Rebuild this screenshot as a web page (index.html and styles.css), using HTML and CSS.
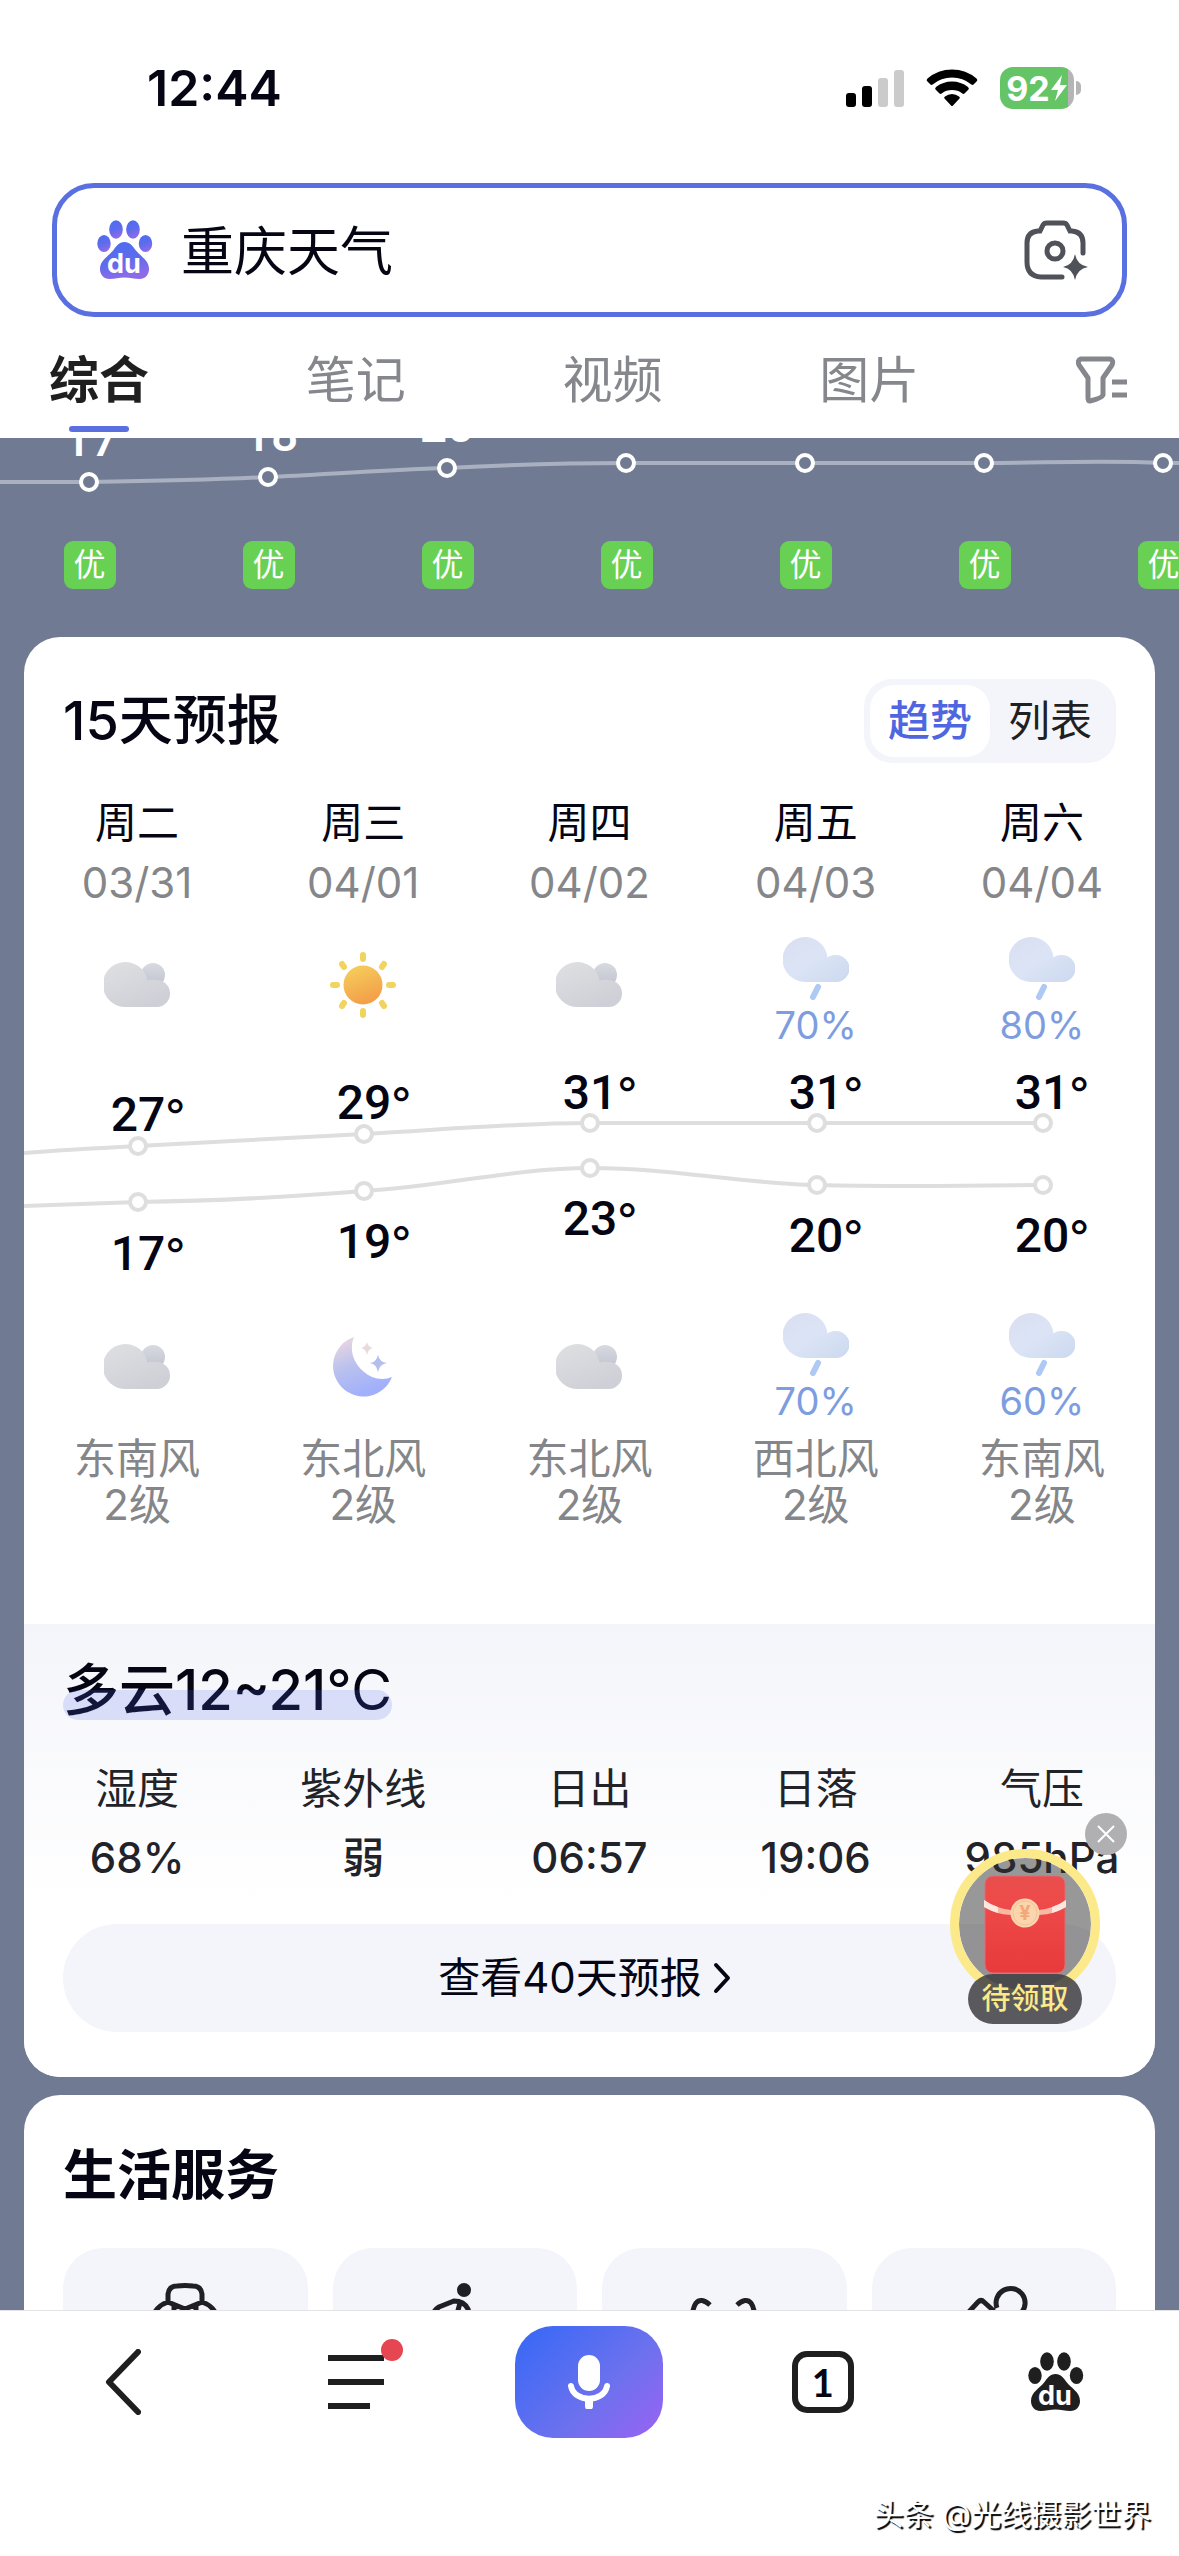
FILE: index.html
```html
<!DOCTYPE html>
<html lang="zh-CN">
<head>
    <meta charset="UTF-8">
    <meta name="viewport" content="width=device-width, initial-scale=1.0">
    <title>重庆天气</title>
    <link rel="stylesheet" href="styles.css">
</head>
<body>

    <!-- Shared icons -->
    <svg class="defs" width="0" height="0" aria-hidden="true">
        <defs>
            <linearGradient id="pawFill" x1="0" y1="0" x2="0.3" y2="1">
                <stop offset="0" stop-color="#4a6cf0"/>
                <stop offset="0.6" stop-color="#5f6cec"/>
                <stop offset="1" stop-color="#8c6bea"/>
            </linearGradient>
            <linearGradient id="cloudFill" x1="0" y1="0" x2="0.6" y2="1">
                <stop offset="0" stop-color="#dfe0e2"/>
                <stop offset="1" stop-color="#cfd0d7"/>
            </linearGradient>
            <linearGradient id="cloudBack" x1="0" y1="0" x2="0" y2="1">
                <stop offset="0" stop-color="#d8dae0"/>
                <stop offset="1" stop-color="#bfc3cf"/>
            </linearGradient>
            <linearGradient id="rainFill" x1="0" y1="0" x2="1" y2="1">
                <stop offset="0" stop-color="#dadff0"/>
                <stop offset="0.5" stop-color="#dbe4f6"/>
                <stop offset="1" stop-color="#cbd8ee"/>
            </linearGradient>
            <linearGradient id="sunFill" x1="0" y1="0" x2="0.4" y2="1">
                <stop offset="0" stop-color="#f6d25c"/>
                <stop offset="1" stop-color="#f3a04a"/>
            </linearGradient>
            <linearGradient id="moonFill" x1="0" y1="0" x2="0.4" y2="1">
                <stop offset="0" stop-color="#f2dade"/>
                <stop offset="0.5" stop-color="#bcc2ee"/>
                <stop offset="1" stop-color="#a0b0fa"/>
            </linearGradient>
            <linearGradient id="packetFill" x1="0" y1="0" x2="0" y2="1">
                <stop offset="0" stop-color="#e84e4c"/>
                <stop offset="0.25" stop-color="#ee4b4a"/>
                <stop offset="1" stop-color="#e83a3b"/>
            </linearGradient>
        </defs>
        <symbol id="paw" viewBox="0 0 56 60">
            <ellipse cx="19" cy="9.5" rx="6.8" ry="9.2"/>
            <ellipse cx="36" cy="9.5" rx="6.8" ry="9.2"/>
            <ellipse cx="7" cy="23.5" rx="6.7" ry="8.6"/>
            <ellipse cx="48.5" cy="23.5" rx="6.7" ry="8.6"/>
            <path d="M27.5 22C33 22 35.5 26 38.5 30C43 36 52 40 52 49C52 55 48 59 42.5 59C37 59 33 57.5 27.5 57.5C22 57.5 18 59 12.5 59C7 59 3 55 3 49C3 40 12 36 16.5 30C19.5 26 22 22 27.5 22Z"/>
            <text class="paw-text" x="27" y="53" text-anchor="middle">du</text>
        </symbol>
        <symbol id="cloud" viewBox="0 0 66 46">
            <circle cx="49" cy="13" r="12" fill="url(#cloudBack)"/>
            <path d="M22 45A22.5 22.5 0 1 1 43.5 18.5C46 17.5 49 17.5 52 18A13.5 13.5 0 0 1 53 45Z" fill="url(#cloudFill)"/>
        </symbol>
        <symbol id="rain" viewBox="0 0 66 64">
            <path d="M22 45A22.5 22.5 0 1 1 44.5 20.5C47 18.5 50 18 53 18A13.5 13.5 0 0 1 53 45Z" fill="url(#rainFill)"/>
            <path d="M35 50L30 60" stroke="#aec9f4" stroke-width="6" stroke-linecap="round"/>
        </symbol>
        <symbol id="sun" viewBox="0 0 66 66">
            <circle cx="33" cy="33" r="19.5" fill="url(#sunFill)"/>
            <g stroke="#f1d45e" stroke-width="6" stroke-linecap="round">
                <path d="M33 3V7M33 59V63M3 33H7M59 33H63M12 12L14 15M52 51L54 54M54 12L52 15M14 51L12 54"/>
            </g>
        </symbol>
        <symbol id="moon" viewBox="0 0 60 60">
            <path d="M21 0A30.5 30.5 0 1 0 59 40C50 44 38 42 30 34C20 25 16 12 21 0Z" fill="url(#moonFill)"/>
            <path d="M34 5Q35 10 40 11Q35 12 34 18Q33 12 28 11Q33 10 34 5Z" fill="#ead8dc"/>
            <path d="M45 18Q46.5 25 54 26Q46.5 27 45 35Q43.5 27 37 26Q43.5 25 45 18Z" fill="#b4bfec"/>
        </symbol>
    </svg>

    <header class="top">
        <div class="status">
            <span class="time">12:44</span>
            <div class="status-icons">
                <svg width="58" height="38" viewBox="0 0 58 38" aria-hidden="true">
                    <rect x="0" y="24" width="10" height="14" rx="3"/>
                    <rect x="16" y="17" width="10" height="21" rx="3"/>
                    <rect x="32" y="9" width="10" height="29" rx="3" fill="#cbcbcb"/>
                    <rect x="48" y="1" width="10" height="37" rx="3" fill="#cbcbcb"/>
                </svg>
                <svg width="52" height="38" viewBox="0 0 52 38" aria-hidden="true">
                    <path d="M1 12Q0 11 1.5 9.5Q12 0.5 26 0.5Q40 0.5 50.5 9.5Q52 11 51 12L47.5 15.5Q46.5 16.5 45 15.3Q37 8.5 26 8.5Q15 8.5 7 15.3Q5.5 16.5 4.5 15.5Z"/>
                    <path d="M9.5 20.5Q8.5 19.5 10 18Q17 12.5 26 12.5Q35 12.5 42 18Q43.5 19.5 42.5 20.5L38.5 24.5Q37.5 25.5 36 24.3Q32 21 26 21Q20 21 16 24.3Q14.5 25.5 13.5 24.5Z"/>
                    <path d="M18.5 29.5Q17.5 28.5 19 27.5Q22 25 26 25Q30 25 33 27.5Q34.5 28.5 33.5 29.5L27 36.5Q26 37.5 25 36.5Z"/>
                </svg>
                <div class="battery">
                    <span>92</span>
                    <svg width="18" height="28" viewBox="0 0 18 28" aria-hidden="true"><path d="M12 1L1 16H8L5 27L17 11H10Z" fill="#fff"/></svg>
                </div>
            </div>
        </div>

        <form class="search">
            <svg class="logo" width="56" height="60" aria-hidden="true"><use href="#paw"/></svg>
            <input type="text" name="wd" value="重庆天气" aria-label="搜索">
            <button type="button" aria-label="拍照搜索">
                <svg width="64" height="60" viewBox="0 0 64 60" fill="none" stroke="#50525a" stroke-width="5" stroke-linecap="round" aria-hidden="true">
                    <path d="M59 33V23Q59 12 48 11H46L43 5Q42 3 39 3H23Q20 3 19 5L16 11H14Q3 12 3 23V42Q3 56 17 57H38"/>
                    <circle cx="31" cy="31" r="8"/>
                    <path d="M51 34Q53 45 64 47Q53 49 51 60Q49 49 39 47Q49 45 51 34Z" fill="#50525a" stroke="none"/>
                </svg>
            </button>
        </form>

        <nav class="tabs">
            <a class="tab active" href="#all">综合</a>
            <a class="tab" href="#notes">笔记</a>
            <a class="tab" href="#video">视频</a>
            <a class="tab" href="#images">图片</a>
            <button type="button" aria-label="筛选">
                <svg width="52" height="48" viewBox="0 0 52 48" fill="none" stroke="#85878c" stroke-width="5" stroke-linejoin="round" aria-hidden="true">
                    <path d="M5 3H34Q38 4 36 9L27 22V39Q26 42 14 45Q12 45 12 42V22L3 9Q1 4 5 3Z"/>
                    <path d="M36 26H51M36 39H51"/>
                </svg>
            </button>
        </nav>
    </header>

    <main class="content">
        <section class="hourly">
            <svg class="hourly-chart" viewBox="0 0 1179 70">
                <path d="M0 44C30 44 60 44 89 44C150 43 208 42 268 39C330 36 385 32 447 30C507 27 566 25 626 25H984C1043 25 1103 22 1163 25H1179" fill="none" stroke="#a9b1c1" stroke-width="4"/>
                <g fill="#707b93" stroke="#fff" stroke-width="4">
                    <circle cx="89" cy="44" r="8"/>
                    <circle cx="268" cy="39" r="8"/>
                    <circle cx="447" cy="30" r="8"/>
                    <circle cx="626" cy="25" r="8"/>
                    <circle cx="805" cy="25" r="8"/>
                    <circle cx="984" cy="25" r="8"/>
                    <circle cx="1163" cy="25" r="8"/>
                </g>
                <g class="hourly-temp">
                    <text x="91" y="18">17</text>
                    <text x="271" y="13">18</text>
                    <text x="447" y="4">20</text>
                </g>
            </svg>
            <ul class="air">
                <li><span>优</span></li>
                <li><span>优</span></li>
                <li><span>优</span></li>
                <li><span>优</span></li>
                <li><span>优</span></li>
                <li><span>优</span></li>
                <li><span>优</span></li>
            </ul>
        </section>

        <section class="card">
            <div class="card-head">
                <h2 class="forecast-title">15天预报</h2>
                <div class="toggle">
                    <button type="button" class="on">趋势</button>
                    <button type="button">列表</button>
                </div>
            </div>

            <div class="days">
                <div class="day">
                    <div class="name">周二</div>
                    <div class="date">03/31</div>
                    <div class="icon"><svg width="66" height="46"><use href="#cloud"/></svg></div>
                </div>
                <div class="day">
                    <div class="name">周三</div>
                    <div class="date">04/01</div>
                    <div class="icon"><svg width="66" height="66"><use href="#sun"/></svg></div>
                </div>
                <div class="day">
                    <div class="name">周四</div>
                    <div class="date">04/02</div>
                    <div class="icon"><svg width="66" height="46"><use href="#cloud"/></svg></div>
                </div>
                <div class="day">
                    <div class="name">周五</div>
                    <div class="date">04/03</div>
                    <div class="icon"><svg width="66" height="64"><use href="#rain"/></svg><span>70%</span></div>
                </div>
                <div class="day">
                    <div class="name">周六</div>
                    <div class="date">04/04</div>
                    <div class="icon"><svg width="66" height="64"><use href="#rain"/></svg><span>80%</span></div>
                </div>
            </div>

            <svg class="trend" viewBox="0 6 1131 268">
                <g class="trend-line">
                    <path d="M0 114C38 111 76 109 114 107C190 103 265 99 340 95C416 91 490 84 566 84H1019"/>
                    <path d="M0 167C38 166 76 164 114 163C190 162 265 158 340 152C416 148 490 129 566 129C650 129 710 144 792 146C870 148 940 147 1019 146"/>
                </g>
                <g class="trend-dot">
                    <circle cx="114" cy="107" r="8"/>
                    <circle cx="340" cy="95" r="8"/>
                    <circle cx="566" cy="84" r="8"/>
                    <circle cx="793" cy="84" r="8"/>
                    <circle cx="1019" cy="84" r="8"/>
                    <circle cx="114" cy="163" r="8"/>
                    <circle cx="340" cy="152" r="8"/>
                    <circle cx="566" cy="129" r="8"/>
                    <circle cx="793" cy="146" r="8"/>
                    <circle cx="1019" cy="146" r="8"/>
                </g>
                <g class="trend-temp">
                    <text x="124" y="92">27<tspan>°</tspan></text>
                    <text x="350" y="80">29<tspan>°</tspan></text>
                    <text x="576" y="70">31<tspan>°</tspan></text>
                    <text x="802" y="70">31<tspan>°</tspan></text>
                    <text x="1028" y="70">31<tspan>°</tspan></text>
                    <text x="124" y="231">17<tspan>°</tspan></text>
                    <text x="350" y="219">19<tspan>°</tspan></text>
                    <text x="576" y="196">23<tspan>°</tspan></text>
                    <text x="802" y="213">20<tspan>°</tspan></text>
                    <text x="1028" y="213">20<tspan>°</tspan></text>
                </g>
            </svg>

            <div class="days nights">
                <div class="day">
                    <div class="icon"><svg width="66" height="46"><use href="#cloud"/></svg></div>
                    <div class="wind">东南风<br>2级</div>
                </div>
                <div class="day">
                    <div class="icon"><svg width="60" height="60"><use href="#moon"/></svg></div>
                    <div class="wind">东北风<br>2级</div>
                </div>
                <div class="day">
                    <div class="icon"><svg width="66" height="46"><use href="#cloud"/></svg></div>
                    <div class="wind">东北风<br>2级</div>
                </div>
                <div class="day">
                    <div class="icon"><svg width="66" height="64"><use href="#rain"/></svg><span>70%</span></div>
                    <div class="wind">西北风<br>2级</div>
                </div>
                <div class="day">
                    <div class="icon"><svg width="66" height="64"><use href="#rain"/></svg><span>60%</span></div>
                    <div class="wind">东南风<br>2级</div>
                </div>
            </div>

            <div class="detail">
                <h3>多云12~21<span>℃</span></h3>
                <dl class="facts">
                    <div><dt>湿度</dt><dd>68%</dd></div>
                    <div><dt>紫外线</dt><dd>弱</dd></div>
                    <div><dt>日出</dt><dd>06:57</dd></div>
                    <div><dt>日落</dt><dd>19:06</dd></div>
                    <div><dt>气压</dt><dd>985hPa</dd></div>
                </dl>
                <a class="more" href="#forty">
                    查看40天预报
                    <svg width="18" height="32" viewBox="0 0 18 32" fill="none" stroke="#050514" stroke-width="4" stroke-linecap="round" stroke-linejoin="round" aria-hidden="true"><path d="M3 3L15 16L3 29"/></svg>
                </a>
            </div>
        </section>

        <section class="card life">
            <h2>生活服务</h2>
            <div class="tiles">
                <a class="tile" href="#dress" aria-label="穿衣">
                    <svg width="68" height="68" viewBox="0 0 68 68" aria-hidden="true"><path d="M17 19V11Q18 3 26 3Q34 2 42 3Q50 3 51 11V19L34 26ZM17 19Q5 23 2 34V60M51 19Q63 23 66 34V60M23 21V34M34 26V60M45 21V34"/></svg>
                </a>
                <a class="tile" href="#sport" aria-label="运动">
                    <svg width="68" height="68" viewBox="0 0 68 68" aria-hidden="true"><circle class="solid" cx="43" cy="7" r="7"/><path d="M11 33Q13 27 18 24L33 18Q43 18 47 26L50 36M39 20L33 42"/></svg>
                </a>
                <a class="tile" href="#sunglasses" aria-label="防晒">
                    <svg width="68" height="68" viewBox="0 0 68 68" aria-hidden="true"><path d="M1 38Q3 24 6 20Q11 14 20 22M66 38Q64 24 61 20Q56 14 47 22"/></svg>
                </a>
                <a class="tile" href="#travel" aria-label="出行">
                    <svg width="68" height="68" viewBox="0 0 68 68" aria-hidden="true"><path d="M6 32L18 19Q21 16 24 19L34 28M37 25A14.5 14.5 0 1 1 61 30"/></svg>
                </a>
            </div>
        </section>

        <aside class="packet">
            <button type="button" class="close" aria-label="关闭">
                <svg width="18" height="18" viewBox="0 0 18 18" stroke="#fff" stroke-width="2" aria-hidden="true"><path d="M1 1L17 17M17 1L1 17"/></svg>
            </button>
            <div class="ring">
                <svg width="84" height="98" viewBox="0 0 84 98" aria-hidden="true">
                    <rect x="2" y="1" width="80" height="97" rx="8" fill="url(#packetFill)" stroke="#e26b74" stroke-width="1"/>
                    <path d="M1 25Q12 33 28 35H56Q72 33 83 25V32Q72 39 56 40H28Q12 39 1 32Z" fill="#f9b8a2"/>
                    <path d="M1 25Q8 30 15 32V38Q8 36 1 32Z" fill="#fde7e0"/>
                    <path d="M83 25Q76 30 69 32V38Q76 36 83 32Z" fill="#fde7e0"/>
                    <circle cx="42" cy="38" r="14.5" fill="#fbd5ae"/>
                    <circle cx="42" cy="38" r="12" fill="none" stroke="#f5c295" stroke-width="1"/>
                    <text class="yen" x="42" y="45" text-anchor="middle">¥</text>
                </svg>
            </div>
            <a class="claim" href="#claim">待领取</a>
        </aside>
    </main>

    <footer class="bottom">
        <nav class="toolbar">
            <button type="button" aria-label="返回">
                <svg width="36" height="66" viewBox="0 0 36 66" fill="none" stroke="#1f1f1f" stroke-width="6" stroke-linecap="round" stroke-linejoin="round" aria-hidden="true"><path d="M33 3L4 33L33 63"/></svg>
            </button>
            <button type="button" class="menu" aria-label="菜单">
                <svg width="56" height="56" viewBox="0 0 56 56" stroke="#1f1f1f" stroke-width="6" aria-hidden="true"><path d="M0 4H56M0 28H56M0 52H42"/></svg>
            </button>
            <button type="button" class="mic" aria-label="语音">
                <svg width="42" height="54" viewBox="0 0 42 54" fill="none" stroke="#fff" stroke-width="6" stroke-linecap="round" aria-hidden="true">
                    <rect x="10" y="0" width="22" height="36" rx="11" fill="#fff" stroke="none"/>
                    <path d="M3 31C6 48 36 48 39 31"/>
                    <path d="M21 45V51" stroke-width="8"/>
                </svg>
            </button>
            <button type="button" aria-label="窗口"><span class="count">1</span></button>
            <button type="button" class="home" aria-label="首页">
                <svg width="56" height="60" aria-hidden="true"><use href="#paw"/></svg>
            </button>
        </nav>
        <p class="credit">头条 @光线摄影世界</p>
    </footer>

</body>
</html>
```
FILE: styles.css
```css
* {
    box-sizing: border-box;
}

body {
    display: flex;
    flex-direction: column;
    height: 100vh;
    margin: 0;
    background-color: #fff;
    color: #050514;
    font-family: Inter, "Noto Sans CJK SC", sans-serif;
    font-size: 42px;
}

h2, h3, p, ul, dl, dd {
    margin: 0;
    padding: 0;
}

h2 {
    font-size: 54px;
    font-weight: 600;
    line-height: 80px;
}

a {
    color: inherit;
    text-decoration: none;
}

button {
    padding: 0;
    border: none;
    background: none;
    color: inherit;
    font: inherit;
    cursor: pointer;
}

svg {
    display: block;
}

.defs {
    position: absolute;
}

.paw-text {
    fill: #fff;
    font-family: Inter, sans-serif;
    font-size: 27px;
    font-weight: 700;
}

/* Header */
.status {
    display: flex;
    align-items: center;
    justify-content: space-between;
    height: 176px;
    padding: 0 105px 0 147px;
}

.time {
    font-size: 50px;
    font-weight: 600;
}

.status-icons {
    display: flex;
    align-items: center;
    gap: 22px;
}

.battery {
    position: relative;
    display: flex;
    align-items: center;
    justify-content: center;
    width: 74px;
    height: 42px;
    border-radius: 13px;
    background: linear-gradient(90deg, #65c466 92%, #b5b5b5 92%);
    color: #fff;
    font-size: 34px;
    font-weight: 700;
}

.battery::after {
    content: "";
    position: absolute;
    right: -7px;
    top: 14px;
    width: 5px;
    height: 14px;
    border-radius: 0 5px 5px 0;
    background-color: #b5b5b5;
}

.search {
    display: flex;
    align-items: center;
    gap: 28px;
    height: 134px;
    margin: 7px 52px 0;
    padding: 0 34px 0 40px;
    border: 5px solid #5a70e0;
    border-radius: 42px;
}

.logo {
    fill: url(#pawFill);
}

.search input {
    flex: 1;
    min-width: 0;
    padding: 3px 0 0;
    border: none;
    outline: none;
    background: none;
    color: #050514;
    font: inherit;
    font-size: 53px;
    line-height: 60px;
}

.tabs {
    display: flex;
    justify-content: space-between;
    padding: 30px 51px 25px 49px;
    color: #85878c;
    font-size: 50px;
    line-height: 66px;
}

.tab {
    position: relative;
}

.tab.active {
    color: #1f1f1f;
    font-weight: 700;
}

.tab.active::after {
    content: "";
    position: absolute;
    bottom: -19px;
    left: 20px;
    right: 20px;
    height: 6px;
    border-radius: 3px;
    background-color: #5a70e0;
}

/* Scrolled page */
.content {
    position: relative;
    flex: 1;
    min-height: 0;
    overflow: hidden;
    background-color: #707b93;
}

.hourly {
    padding-bottom: 48px;
}

.hourly-chart {
    width: 100%;
    overflow: hidden;
}

.hourly-temp {
    fill: #fff;
    font-family: Roboto, sans-serif;
    font-size: 48px;
    font-weight: 500;
    text-anchor: middle;
}

.air {
    display: flex;
    margin-top: 33px;
    list-style: none;
}

.air li {
    display: flex;
    flex: 0 0 179px;
    justify-content: center;
}

.air span {
    width: 52px;
    border-radius: 9px;
    background-color: #68d154;
    color: #fff;
    font-size: 32px;
    line-height: 48px;
    text-align: center;
}

.card {
    margin: 0 24px 18px;
    border-radius: 36px;
    background-color: #fff;
    overflow: hidden;
}

.card-head {
    display: flex;
    align-items: center;
    justify-content: space-between;
    padding: 42px 39px 30px;
}

.forecast-title {
    font-weight: 500;
}

.toggle {
    display: flex;
    padding: 6px;
    border-radius: 28px;
    background-color: #f4f5fa;
    color: #1f1f24;
}

.toggle button {
    width: 120px;
    border-radius: 24px;
    line-height: 72px;
}

.toggle .on {
    background-color: #fff;
    color: #5066e0;
    font-weight: 500;
}

.days {
    display: grid;
    grid-template-columns: repeat(5, 1fr);
    text-align: center;
}

.name,
.date {
    line-height: 60px;
}

.date {
    color: #858689;
}

.icon {
    display: flex;
    flex-direction: column;
    align-items: center;
    justify-content: center;
    gap: 4px;
    height: 108px;
}

.date + .icon {
    margin-top: 24px;
}

.date + .icon svg:only-child {
    margin-bottom: 12px;
}

.icon span {
    color: #7d9de0;
    font-size: 38px;
    line-height: 40px;
}

.trend {
    width: 100%;
}

.trend-line {
    fill: none;
    stroke: #dedede;
    stroke-width: 4px;
}

.trend-dot {
    fill: #fff;
    stroke: #dedede;
    stroke-width: 4px;
}

.trend-temp {
    fill: #050514;
    font-family: Roboto, sans-serif;
    font-size: 48px;
    font-weight: 500;
    text-anchor: middle;
}

.trend-temp tspan {
    font-family: Inter, sans-serif;
    font-size: 44px;
    font-weight: 400;
}

.nights {
    padding-bottom: 96px;
}

.wind {
    margin-top: 15px;
    color: #848689;
    line-height: 46px;
}

.detail {
    padding: 26px 39px 45px;
    background: linear-gradient(#f4f5fa, #fff 280px);
}

.detail h3 {
    position: relative;
    width: fit-content;
    font-size: 56px;
    font-weight: 500;
    line-height: 80px;
}

.detail h3 span {
    font-weight: 400;
}

.detail h3::after {
    content: "";
    position: absolute;
    left: 0;
    right: 0;
    bottom: 10px;
    height: 30px;
    border-radius: 15px;
    background-color: rgba(80, 102, 240, 0.18);
}

.facts {
    display: grid;
    grid-template-columns: repeat(5, 1fr);
    margin: 29px -39px 0;
    color: #222328;
    line-height: 60px;
    text-align: center;
}

.facts dd {
    margin-top: 9px;
    font-weight: 500;
}

.more {
    display: flex;
    align-items: center;
    justify-content: center;
    gap: 11px;
    height: 108px;
    margin-top: 36px;
    padding-right: 10px;
    border-radius: 54px;
    background-color: #f4f5fa;
    line-height: 60px;
}

.life {
    padding: 41px 39px 45px;
}

.tiles {
    display: grid;
    grid-template-columns: repeat(4, 1fr);
    gap: 25px;
    margin-top: 32px;
}

.tile {
    display: flex;
    justify-content: center;
    height: 230px;
    padding-top: 35px;
    border-radius: 40px;
    background-color: #f4f5fa;
}

.tile svg {
    fill: none;
    stroke: #1f1f24;
    stroke-width: 5px;
}

.tile .solid {
    fill: #1f1f24;
    stroke: none;
}

/* Red packet floating over the page */
.packet {
    position: absolute;
    top: 1375px;
    right: 52px;
    display: flex;
    flex-direction: column;
    align-items: center;
    padding: 36px 27px 0 0;
}

.close {
    position: absolute;
    top: 0;
    right: 0;
    display: flex;
    align-items: center;
    justify-content: center;
    width: 42px;
    height: 42px;
    border-radius: 50%;
    background-color: #b0b0b3;
}

.ring {
    display: flex;
    justify-content: center;
    width: 150px;
    height: 150px;
    padding-top: 17px;
    border: 9px solid #fbe98a;
    border-radius: 50%;
    background-color: rgba(50, 50, 50, 0.5);
    background-clip: padding-box;
}

.yen {
    fill: #f2a878;
    font-size: 20px;
    font-weight: 700;
}

.claim {
    position: relative;
    width: 114px;
    margin-top: -25px;
    border-radius: 25px;
    background-color: rgba(62, 62, 66, 0.85);
    color: #fbe98a;
    font-size: 29px;
    font-weight: 500;
    line-height: 50px;
    text-align: center;
}

/* Bottom bar */
.bottom {
    height: 246px;
    border-top: 1px solid #e3e3e6;
    background-color: #fff;
}

.toolbar {
    display: grid;
    grid-template-columns: repeat(5, 1fr);
    align-items: center;
    justify-items: center;
    padding: 15px 6px 0;
}

.menu {
    position: relative;
}

.menu::after {
    content: "";
    position: absolute;
    top: -15px;
    right: -19px;
    width: 22px;
    height: 22px;
    border-radius: 50%;
    background-color: #e64552;
}

.mic {
    display: flex;
    align-items: center;
    justify-content: center;
    width: 148px;
    height: 112px;
    border-radius: 38px;
    background: linear-gradient(135deg, #3468f6, #6d71ee 60%, #9b62f2);
}

.count {
    display: block;
    width: 62px;
    height: 62px;
    border: 6px solid #1f1f1f;
    border-radius: 15px;
    font-family: Lato, sans-serif;
    font-size: 38px;
    font-weight: 700;
    line-height: 50px;
}

.home {
    fill: #1f1f1f;
}

.credit {
    margin: 54px 28px 0;
    color: #fff;
    font-size: 30px;
    line-height: 44px;
    text-align: right;
    text-shadow: 2px 2px 1px #000;
}
```
